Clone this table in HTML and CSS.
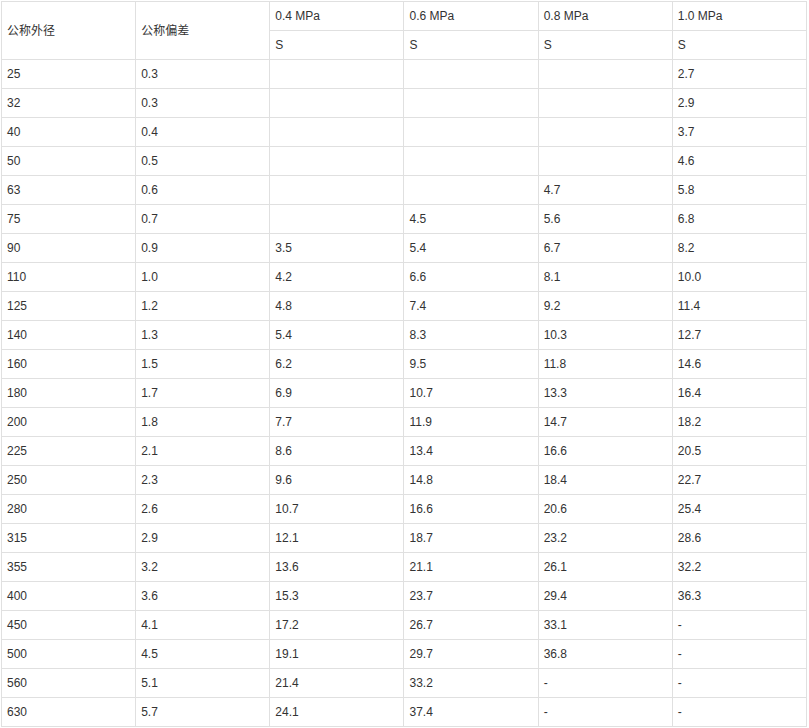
FILE: index.html
```html
<!DOCTYPE html>
<html>
<head>
<meta charset="utf-8">
<link rel="stylesheet" href="styles.css">
</head>
<body>
<table class="spec">
<colgroup><col><col><col><col><col><col></colgroup>
<thead>
<tr><td rowspan="2" class="zh">公称外径</td><td rowspan="2" class="zh">公称偏差</td><td>0.4 MPa</td><td>0.6 MPa</td><td>0.8 MPa</td><td>1.0 MPa</td></tr>
<tr><td>S</td><td>S</td><td>S</td><td>S</td></tr>
</thead>
<tbody>
<tr><td>25</td><td>0.3</td><td></td><td></td><td></td><td>2.7</td></tr>
<tr><td>32</td><td>0.3</td><td></td><td></td><td></td><td>2.9</td></tr>
<tr><td>40</td><td>0.4</td><td></td><td></td><td></td><td>3.7</td></tr>
<tr><td>50</td><td>0.5</td><td></td><td></td><td></td><td>4.6</td></tr>
<tr><td>63</td><td>0.6</td><td></td><td></td><td>4.7</td><td>5.8</td></tr>
<tr><td>75</td><td>0.7</td><td></td><td>4.5</td><td>5.6</td><td>6.8</td></tr>
<tr><td>90</td><td>0.9</td><td>3.5</td><td>5.4</td><td>6.7</td><td>8.2</td></tr>
<tr><td>110</td><td>1.0</td><td>4.2</td><td>6.6</td><td>8.1</td><td>10.0</td></tr>
<tr><td>125</td><td>1.2</td><td>4.8</td><td>7.4</td><td>9.2</td><td>11.4</td></tr>
<tr><td>140</td><td>1.3</td><td>5.4</td><td>8.3</td><td>10.3</td><td>12.7</td></tr>
<tr><td>160</td><td>1.5</td><td>6.2</td><td>9.5</td><td>11.8</td><td>14.6</td></tr>
<tr><td>180</td><td>1.7</td><td>6.9</td><td>10.7</td><td>13.3</td><td>16.4</td></tr>
<tr><td>200</td><td>1.8</td><td>7.7</td><td>11.9</td><td>14.7</td><td>18.2</td></tr>
<tr><td>225</td><td>2.1</td><td>8.6</td><td>13.4</td><td>16.6</td><td>20.5</td></tr>
<tr><td>250</td><td>2.3</td><td>9.6</td><td>14.8</td><td>18.4</td><td>22.7</td></tr>
<tr><td>280</td><td>2.6</td><td>10.7</td><td>16.6</td><td>20.6</td><td>25.4</td></tr>
<tr><td>315</td><td>2.9</td><td>12.1</td><td>18.7</td><td>23.2</td><td>28.6</td></tr>
<tr><td>355</td><td>3.2</td><td>13.6</td><td>21.1</td><td>26.1</td><td>32.2</td></tr>
<tr><td>400</td><td>3.6</td><td>15.3</td><td>23.7</td><td>29.4</td><td>36.3</td></tr>
<tr><td>450</td><td>4.1</td><td>17.2</td><td>26.7</td><td>33.1</td><td>-</td></tr>
<tr><td>500</td><td>4.5</td><td>19.1</td><td>29.7</td><td>36.8</td><td>-</td></tr>
<tr><td>560</td><td>5.1</td><td>21.4</td><td>33.2</td><td>-</td><td>-</td></tr>
<tr><td>630</td><td>5.7</td><td>24.1</td><td>37.4</td><td>-</td><td>-</td></tr>
</tbody>
</table>
</body>
</html>
```

FILE: styles.css
```css
html, body {
  margin: 0;
  padding: 0;
  background: #fff;
}
body {
  font-family: "Liberation Sans", Arial, "Noto Sans CJK SC", sans-serif;
  font-size: 12px;
  color: #333;
}
.spec {
  border-collapse: collapse;
  table-layout: fixed;
  width: 806px;
  margin: 1px 0 0 1px;
}
.spec td {
  border: 1px solid #e0e0e0;
  height: 28px;
  padding: 0 5px;
  vertical-align: middle;
  line-height: 16px;
  box-sizing: border-box;
}
.spec tr {
  height: 29px;
}
.spec .zh {
  font-family: "Noto Sans CJK SC", sans-serif;
  font-size: 12px;
  padding-bottom: 2px;
}
```
